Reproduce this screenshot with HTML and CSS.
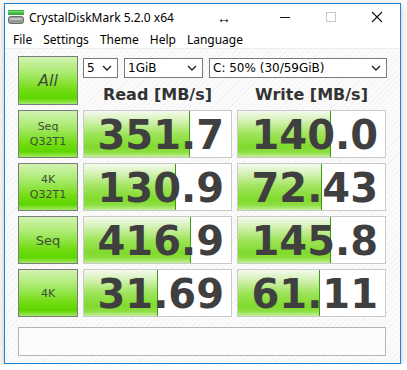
FILE: index.html
```html
<!DOCTYPE html>
<html lang="en">
<head>
    <meta charset="UTF-8">
    <meta name="viewport" content="width=device-width, initial-scale=1.0">
    <title>CrystalDiskMark 5.2.0 x64</title>
    <link rel="stylesheet" href="styles.css">
</head>
<body>
    <div class="window">
        <div class="titlebar">
            <svg class="app-icon" width="16" height="16" viewBox="0 0 16 16">
                <rect x="0" y="1" width="16" height="5" fill="#3cb43c"/>
                <rect x="0" y="2" width="16" height="1.5" fill="#6fd86f"/>
                <rect x="0.5" y="7.5" width="15" height="7" rx="2" fill="#9a9a9a" stroke="#6e6e6e"/>
                <rect x="2" y="9" width="12" height="2" fill="#c4c4c4"/>
                <rect x="12" y="12" width="2" height="1.5" fill="#35d035"/>
            </svg>
            <span class="title">CrystalDiskMark 5.2.0 x64</span>
            <span class="resize">&#8596;</span>
            <div class="controls">
                <svg width="46" height="26" viewBox="0 0 46 26"><line x1="18" y1="13.5" x2="28" y2="13.5" stroke="#111" stroke-width="1"/></svg>
                <svg width="46" height="26" viewBox="0 0 46 26"><rect x="18.5" y="8.5" width="9" height="9" fill="none" stroke="#c8c8c8"/></svg>
                <svg width="46" height="26" viewBox="0 0 46 26"><path d="M18 8 L28 18 M28 8 L18 18" stroke="#111" stroke-width="1.1"/></svg>
            </div>
        </div>
        <div class="menubar">
            <span>File</span>
            <span>Settings</span>
            <span>Theme</span>
            <span>Help</span>
            <span>Language</span>
        </div>
        <div class="client">
            <div class="bench">
                <div class="btn btn-all">All</div>
                <div class="combos">
                    <div class="combo combo-count">5<svg class="chev" width="10" height="6" viewBox="0 0 10 6"><path d="M1 1 L5 5 L9 1" fill="none" stroke="#222" stroke-width="1.4"/></svg></div>
                    <div class="combo combo-size">1GiB<svg class="chev" width="10" height="6" viewBox="0 0 10 6"><path d="M1 1 L5 5 L9 1" fill="none" stroke="#222" stroke-width="1.4"/></svg></div>
                    <div class="combo combo-drive">C: 50% (30/59GiB)<svg class="chev" width="10" height="6" viewBox="0 0 10 6"><path d="M1 1 L5 5 L9 1" fill="none" stroke="#222" stroke-width="1.4"/></svg></div>
                </div>
                <div class="head">Read [MB/s]</div>
                <div class="head">Write [MB/s]</div>

                <div class="btn">Seq<br>Q32T1</div>
                <div class="cell"><div class="bar" style="width: 105px"></div><span>351.7</span></div>
                <div class="cell"><div class="bar" style="width: 92px"></div><span>140.0</span></div>

                <div class="btn">4K<br>Q32T1</div>
                <div class="cell"><div class="bar" style="width: 91px"></div><span>130.9</span></div>
                <div class="cell"><div class="bar" style="width: 83px"></div><span>72.43</span></div>

                <div class="btn btn-big">Seq</div>
                <div class="cell"><div class="bar" style="width: 106px"></div><span>416.9</span></div>
                <div class="cell"><div class="bar" style="width: 92px"></div><span>145.8</span></div>

                <div class="btn">4K</div>
                <div class="cell"><div class="bar" style="width: 73px"></div><span>31.69</span></div>
                <div class="cell"><div class="bar" style="width: 81px"></div><span>61.11</span></div>
            </div>
            <div class="comment"></div>
        </div>
    </div>
</body>
</html>
```

FILE: styles.css
```css
body {
    margin: 0;
    background: #fff;
    font-family: "Noto Sans", sans-serif;
}
.window {
    margin: 3px 0 0 4px;
    width: 395px;
    height: 359px;
    border: 1px solid #1c83d6;
    background: #fff;
    box-shadow: 0 2px 8px rgba(0, 0, 0, 0.25);
    display: flex;
    flex-direction: column;
}
.titlebar {
    height: 26px;
    display: flex;
    align-items: center;
    font-size: 12px;
    color: #000;
}
.app-icon {
    margin: 0 5px 0 3px;
}
.title {
    width: 188px;
}
.resize {
    font-size: 14px;
    font-weight: bold;
    width: 44px;
}
.controls {
    display: flex;
    margin-left: auto;
}
.menubar {
    height: 18px;
    display: flex;
    align-items: center;
    gap: 0;
    font-size: 12px;
    padding-left: 3px;
}
.menubar span {
    padding: 0 5px;
    margin-right: 1px;
}
.client {
    flex: 1;
    background: repeating-linear-gradient(135deg, #f3f3f3 0 1px, #fbfbfb 1px 4px);
    border-top: 1px solid #ececec;
    padding: 7px 0 0 13px;
}
.bench {
    display: grid;
    grid-template-columns: 60px 149px 149px;
    grid-template-rows: 22px 22px 48px 48px 48px 48px;
    column-gap: 5px;
    row-gap: 5px;
}
.btn {
    border: 1px solid #7c7c7c;
    background: linear-gradient(#d2f3b3 0%, #a8ea6c 35%, #72dc12 70%, #5fd600 88%, #a3ea62 100%);
    font-family: "DejaVu Sans", sans-serif;
    font-size: 11px;
    line-height: 15px;
    color: #3e4e33;
    display: flex;
    align-items: center;
    justify-content: center;
    text-align: center;
}
.btn-all {
    grid-row: span 2;
    font-size: 16px;
    font-style: italic;
}
.btn-big {
    font-size: 13px;
}
.combos {
    grid-column: span 2;
    display: flex;
    gap: 6px;
    align-items: flex-end;
}
.combo {
    height: 18px;
    border: 1px solid #7a7a7a;
    background: #fff;
    font-family: "DejaVu Sans", sans-serif;
    font-size: 12px;
    display: flex;
    align-items: center;
    justify-content: space-between;
    padding: 0 5px 0 3px;
    box-sizing: content-box;
}
.combo-count {
    width: 25px;
}
.combo-size {
    width: 69px;
}
.combo-drive {
    flex: 1;
    margin-right: -1px;
}
.head {
    font-family: "DejaVu Sans", sans-serif;
    font-weight: bold;
    font-size: 16px;
    color: #333;
    text-align: center;
    line-height: 22px;
    align-self: end;
    margin-bottom: -1px;
}
.cell {
    position: relative;
    border: 1px solid #c9c9c9;
    background: #fff;
    display: flex;
    align-items: center;
    justify-content: flex-end;
    padding-right: 7px;
    overflow: hidden;
}
.bar {
    position: absolute;
    left: 0;
    top: 0;
    bottom: 0;
    border-right: 1px solid #3c9a10;
    background: linear-gradient(#f4faee 0%, #d3f1b2 22%, #9ee45a 50%, #80da2c 78%, #8fdf44 90%, #c4f09a 100%);
}
.cell span {
    position: relative;
    font-family: "DejaVu Sans", sans-serif;
    font-weight: bold;
    font-size: 40px;
    line-height: 1;
    color: #3f3f3f;
    margin-top: 2px;
}
.comment {
    width: 366px;
    height: 27px;
    margin-top: 10px;
    border: 1px solid #b5b5b5;
    background: rgba(255, 255, 255, 0.6);
}
```
